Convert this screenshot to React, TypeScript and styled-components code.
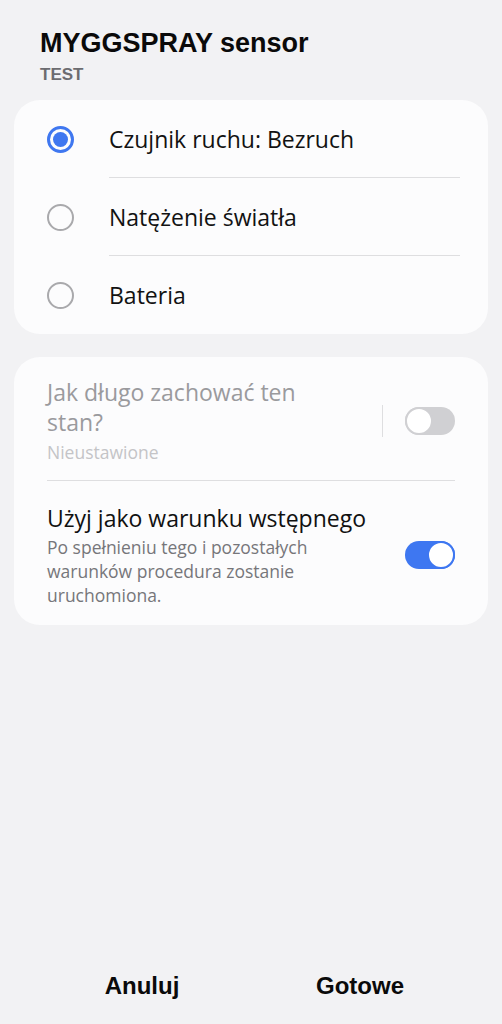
import styled, { createGlobalStyle } from "styled-components";

const GlobalStyle = createGlobalStyle`
  html, body {
    margin: 0;
    padding: 0;
    background: #f2f2f4;
  }
  body {
    font-family: "Open Sans", "Noto Sans", sans-serif;
    color: #101010;
  }
`;

const Page = styled.div`
  width: 502px;
  height: 1024px;
  display: flex;
  flex-direction: column;
  background: #f2f2f4;
  box-sizing: border-box;
`;

const Header = styled.div`
  padding: 26px 40px 0 40px;
  display: flex;
  flex-direction: column;
  height: 100px;
  box-sizing: border-box;
`;

const Title = styled.div`
  font-family: "Liberation Sans", Arial, sans-serif;
  font-weight: 700;
  font-size: 27px;
  line-height: 34px;
  color: #0a0a0a;
`;

const Subtitle = styled.div`
  font-family: "Liberation Sans", Arial, sans-serif;
  font-weight: 700;
  font-size: 17px;
  line-height: 20px;
  color: #6c6c70;
  margin-top: 5px;
`;

const Card = styled.div<{ $mt?: number }>`
  margin: ${(p) => p.$mt ?? 0}px 14px 0 14px;
  background: #fcfcfd;
  border-radius: 26px;
  display: flex;
  flex-direction: column;
`;

const RadioRow = styled.div<{ $divider?: boolean }>`
  display: flex;
  align-items: center;
  height: 78px;
  padding-left: 33px;
  position: relative;
  &::after {
    content: "";
    display: ${(p) => (p.$divider ? "block" : "none")};
    position: absolute;
    left: 95px;
    right: 28px;
    bottom: 0;
    height: 1px;
    background: #dedee0;
  }
`;

const Radio = styled.div<{ $checked?: boolean }>`
  width: 27px;
  height: 27px;
  box-sizing: border-box;
  border-radius: 50%;
  border: ${(p) => (p.$checked ? "3px solid #3f77f0" : "2px solid #a9a9ac")};
  display: flex;
  align-items: center;
  justify-content: center;
  &::before {
    content: "";
    display: ${(p) => (p.$checked ? "block" : "none")};
    width: 15px;
    height: 15px;
    border-radius: 50%;
    background: #3f77f0;
  }
`;

const RadioLabel = styled.div`
  margin-left: 35px;
  font-size: 23px;
  color: #121212;
`;

const SettingRow = styled.div<{ $divider?: boolean; $pt: number; $pb: number }>`
  display: flex;
  align-items: center;
  padding: ${(p) => p.$pt}px 33px ${(p) => p.$pb}px 33px;
  position: relative;
  &::after {
    content: "";
    display: ${(p) => (p.$divider ? "block" : "none")};
    position: absolute;
    left: 33px;
    right: 33px;
    bottom: 0;
    height: 1px;
    background: #dedee0;
  }
`;

const SettingText = styled.div`
  flex: 1;
  display: flex;
  flex-direction: column;
`;

const SettingTitle = styled.div<{ $disabled?: boolean }>`
  font-size: 23px;
  line-height: 30px;
  color: ${(p) => (p.$disabled ? "#9a9a9d" : "#111111")};
  max-width: 300px;
  white-space: ${(p) => (p.$disabled ? "normal" : "nowrap")};
`;

const SettingDesc = styled.div<{ $disabled?: boolean }>`
  font-size: 17.5px;
  line-height: 24px;
  margin-top: ${(p) => (p.$disabled ? 3 : 2)}px;
  color: ${(p) => (p.$disabled ? "#c4c4c7" : "#76767a")};
  max-width: 300px;
`;

const VDivider = styled.div`
  width: 1px;
  height: 32px;
  background: #dedee0;
  margin-right: 22px;
`;

const Toggle = styled.div<{ $on?: boolean }>`
  width: 50px;
  height: 28px;
  border-radius: 14px;
  box-sizing: border-box;
  background: ${(p) => (p.$on ? "#3e77f1" : "#d0d0d3")};
  display: flex;
  align-items: center;
  justify-content: ${(p) => (p.$on ? "flex-end" : "flex-start")};
  flex-shrink: 0;
  &::before {
    content: "";
    width: 28px;
    height: 28px;
    box-sizing: border-box;
    border-radius: 50%;
    background: #ffffff;
    border: 2px solid ${(p) => (p.$on ? "#3e77f1" : "#d0d0d3")};
  }
`;

const Spacer = styled.div`
  flex: 1;
`;

const Footer = styled.div`
  display: grid;
  grid-template-columns: 1fr 1fr;
  height: 76px;
  padding: 0 33px;
  align-items: center;
`;

const FooterButton = styled.div`
  font-family: "Liberation Sans", Arial, sans-serif;
  font-weight: 700;
  font-size: 24px;
  text-align: center;
  color: #0a0a0a;
`;

const options = [
  { label: "Czujnik ruchu: Bezruch", checked: true },
  { label: "Natężenie światła", checked: false },
  { label: "Bateria", checked: false },
];

export default function App() {
  return (
    <>
      <GlobalStyle />
      <Page>
        <Header>
          <Title>MYGGSPRAY sensor</Title>
          <Subtitle>TEST</Subtitle>
        </Header>
        <Card>
          {options.map((o, i) => (
            <RadioRow key={o.label} $divider={i < options.length - 1}>
              <Radio $checked={o.checked} />
              <RadioLabel>{o.label}</RadioLabel>
            </RadioRow>
          ))}
        </Card>
        <Card $mt={23}>
          <SettingRow $divider $pt={20} $pb={17}>
            <SettingText>
              <SettingTitle $disabled>Jak długo zachować ten stan?</SettingTitle>
              <SettingDesc $disabled>Nieustawione</SettingDesc>
            </SettingText>
            <VDivider />
            <Toggle />
          </SettingRow>
          <SettingRow $pt={22} $pb={18}>
            <SettingText>
              <SettingTitle>Użyj jako warunku wstępnego</SettingTitle>
              <SettingDesc>
                Po spełnieniu tego i pozostałych warunków procedura zostanie
                uruchomiona.
              </SettingDesc>
            </SettingText>
            <Toggle $on />
          </SettingRow>
        </Card>
        <Spacer />
        <Footer>
          <FooterButton>Anuluj</FooterButton>
          <FooterButton>Gotowe</FooterButton>
        </Footer>
      </Page>
    </>
  );
}
